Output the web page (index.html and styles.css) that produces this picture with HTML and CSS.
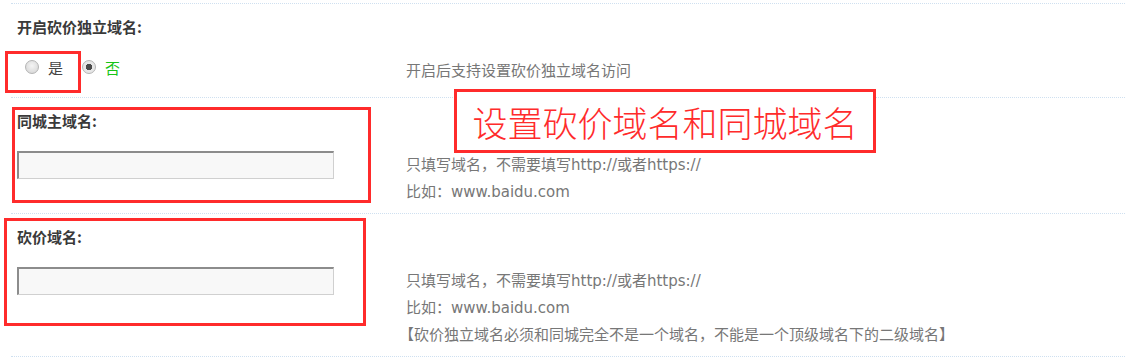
FILE: index.html
```
<!DOCTYPE html>
<html lang="zh-CN">
<head>
	<meta charset="UTF-8">
	<title>砍价独立域名设置</title>
	<link rel="stylesheet" href="styles.css">
</head>
<body>
	<div class="page">
		<div class="form">
			<div class="row">
				<div class="field">
					<div class="label">开启砍价独立域名:</div>
					<div class="radios">
						<label class="radio"><input type="radio" name="open" value="1"><span>是</span></label>
						<label class="radio radio-off"><input type="radio" name="open" value="0" checked><span>否</span></label>
					</div>
				</div>
				<div class="hint">
					<p>开启后支持设置砍价独立域名访问</p>
				</div>
			</div>

			<div class="row">
				<div class="field">
					<div class="label">同城主域名:</div>
					<input type="text" class="text-input">
				</div>
				<div class="hint">
					<p>只填写域名，不需要填写http://或者https://</p>
					<p>比如：www.baidu.com</p>
				</div>
			</div>

			<div class="row row-last">
				<div class="field">
					<div class="label">砍价域名:</div>
					<input type="text" class="text-input">
				</div>
				<div class="hint">
					<p>只填写域名，不需要填写http://或者https://</p>
					<p>比如：www.baidu.com</p>
					<p class="note">【砍价独立域名必须和同城完全不是一个域名，不能是一个顶级域名下的二级域名】</p>
				</div>
			</div>
		</div>

		<!-- 标注框 -->
		<div class="mark mark-yes"></div>
		<div class="mark mark-city"></div>
		<div class="mark mark-bargain"></div>
		<div class="mark mark-title">设置砍价域名和同城域名</div>
	</div>
</body>
</html>
```

FILE: styles.css
```
* {
	margin: 0;
	padding: 0;
	box-sizing: border-box;
}

body {
	font-family: "DejaVu Sans", "Noto Sans CJK SC", sans-serif;
	font-size: 15px;
	color: #333;
	background: #fff;
}

.page {
	position: relative;
	width: 1125px;
	height: 363px;
}

.form {
	margin-left: 11px;
	padding-top: 3px;
}

.row {
	display: flex;
	border-top: 1px dotted #cfe0f0;
}

.row-last {
	border-bottom: 1px dotted #cfe0f0;
}

.field {
	width: 395px;
	padding: 13px 0 0 6px;
}

.label {
	font-family: "Noto Sans CJK SC", sans-serif;
	font-weight: bold;
	line-height: 20px;
	color: #3a3a3a;
}

.radios {
	display: flex;
	align-items: center;
	height: 28px;
	margin-top: 16px;
	padding-left: 8px;
}

.radio {
	display: flex;
	align-items: center;
	gap: 9px;
	margin-right: 19px;
	font-family: "Noto Sans CJK SC", sans-serif;
	color: #444;
}

.radio-off span {
	color: #16c416;
}

.radio input {
	appearance: none;
	-webkit-appearance: none;
	width: 14px;
	height: 14px;
	border-radius: 50%;
	border: 1px solid #b4b4b4;
	background: radial-gradient(circle at 50% 40%, #f4f4f4, #d2d2d2);
}

.radio input:checked {
	background: radial-gradient(circle, #4a4a4a 0 3px, #e6e6e6 3.5px);
}

.text-input {
	display: block;
	width: 317px;
	height: 28px;
	margin-top: 20px;
	background: #f8f8f8;
	border: 1px solid #d0d0d0;
	border-top: 2px solid #8c8c8c;
	border-left: 2px solid #8c8c8c;
	outline: none;
}

.hint {
	padding: 54px 0 7px;
	line-height: 27px;
	color: #777;
}

.row:first-child .hint {
	padding-bottom: 12px;
}

.note {
	text-indent: -7px;
}

.mark {
	position: absolute;
	border: 3px solid #ff2b2b;
}

.mark-yes {
	left: 5px;
	top: 51px;
	width: 76px;
	height: 42px;
}

.mark-city {
	left: 12px;
	top: 107px;
	width: 359px;
	height: 96px;
}

.mark-bargain {
	left: 4px;
	top: 218px;
	width: 362px;
	height: 108px;
}

.mark-title {
	left: 454px;
	top: 89px;
	width: 422px;
	height: 64px;
	display: flex;
	align-items: center;
	justify-content: center;
	font-family: "Noto Sans CJK SC", sans-serif;
	font-weight: 300;
	font-size: 35px;
	color: #ff2b2b;
	background: #fff;
}
```
